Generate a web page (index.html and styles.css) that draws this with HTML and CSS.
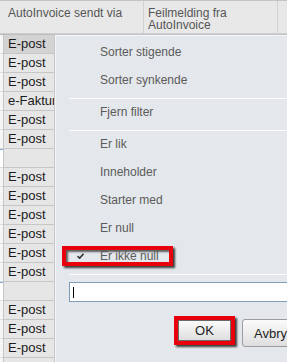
FILE: index.html
```html
<!DOCTYPE html>
<html>
<head>
<meta charset="utf-8">
<title>AutoInvoice filter</title>
<link rel="stylesheet" href="styles.css">
</head>
<body>
<div class="grid">
  <div class="head">
    <div class="hcell first">AutoInvoice sendt via</div>
    <div class="hcell second">Feilmelding fra<br>AutoInvoice</div>
    <div class="hcell rest"></div>
  </div>
  <div class="rows">
    <div class="row selected"><div class="gutter"></div><div class="cell">E-post</div></div>
    <div class="row"><div class="gutter"></div><div class="cell">E-post</div></div>
    <div class="row"><div class="gutter"></div><div class="cell">E-post</div></div>
    <div class="row"><div class="gutter"></div><div class="cell">e-Faktura</div></div>
    <div class="row"><div class="gutter"></div><div class="cell">E-post</div></div>
    <div class="row"><div class="gutter"></div><div class="cell">E-post</div></div>
    <div class="row gap"><div class="gutter"></div><div class="cell"></div></div>
    <div class="row"><div class="gutter"></div><div class="cell">E-post</div></div>
    <div class="row"><div class="gutter"></div><div class="cell">E-post</div></div>
    <div class="row"><div class="gutter"></div><div class="cell">E-post</div></div>
    <div class="row"><div class="gutter"></div><div class="cell">E-post</div></div>
    <div class="row"><div class="gutter"></div><div class="cell">E-post</div></div>
    <div class="row"><div class="gutter"></div><div class="cell">E-post</div></div>
    <div class="row gap"><div class="gutter"></div><div class="cell"></div></div>
    <div class="row"><div class="gutter"></div><div class="cell">E-post</div></div>
    <div class="row"><div class="gutter"></div><div class="cell">E-post</div></div>
    <div class="row"><div class="gutter"></div><div class="cell">E-post</div></div>
    <div class="row"><div class="gutter"></div><div class="cell">E-post</div></div>
  </div>
</div>

<div class="menu">
  <div class="item">Sorter stigende</div>
  <div class="item">Sorter synkende</div>
  <div class="sep"></div>
  <div class="item">Fjern filter</div>
  <div class="sep"></div>
  <div class="item">Er lik</div>
  <div class="item">Inneholder</div>
  <div class="item">Starter med</div>
  <div class="item">Er null</div>
  <div class="item checked">
    <span class="mark">
      <svg class="tick" width="7" height="6" viewBox="0 0 7 6"><path d="M0.5 3.2 L2.6 5.2 L6.5 0.8" fill="none" stroke="#333" stroke-width="1.6"/></svg>
      <span class="label">Er ikke null</span>
    </span>
  </div>
  <div class="sep"></div>
  <div class="filter"><span class="caret"></span></div>
  <div class="buttons">
    <span class="mark ok-mark"><button class="btn ok">OK</button></span>
    <button class="btn cancel">Avbryt</button>
  </div>
</div>
</body>
</html>
```

FILE: styles.css
```css
body{margin:0;width:287px;height:362px;overflow:hidden;position:relative;background:#fff;font-family:"Liberation Sans",Arial,sans-serif;}

.head{display:flex;height:34px;box-sizing:border-box;border-top:1px solid #c4c4c4;border-bottom:1px solid #cdcdcd;background:#e8e8e8;color:#555;font-size:12px;line-height:12px;}
.hcell{box-sizing:border-box;padding-top:6px;white-space:nowrap;}
.hcell.first{width:144px;padding-left:8px;border-right:1px solid #d2d2d2;}
.hcell.second{width:134px;padding-left:4px;border-right:1px solid #d2d2d2;}
.hcell.rest{flex:1;}

.rows{border-top:1px solid #bcbcbc;}
.row{display:flex;height:19px;}
.gutter{width:3px;box-sizing:border-box;height:19px;background:#f6f6f6;border-bottom:1px solid #dcdcdc;}
.row.gap .gutter{background:#fff;box-shadow:inset 0 1px #7ea6d3;}
.cell{width:140px;height:19px;box-sizing:border-box;border-left:1px solid #c6c6c6;border-bottom:1px solid #c6c6c6;background:#e6e6e6;padding-left:4px;font-size:13px;line-height:18px;color:#1b1b1b;white-space:nowrap;overflow:hidden;}
.row.selected .cell{background:#d3d3d3;}

.menu{position:absolute;left:54px;top:34px;width:250px;height:340px;box-sizing:border-box;border:1px solid #c2c6cb;background:#e4e7eb;box-shadow:inset 1px 1px #f4f5f7;padding-top:4px;font-size:12px;color:#5b5b5b;}
.item{height:26px;line-height:26px;padding-left:45px;margin-top:2px;white-space:nowrap;}
.item:first-child{margin-top:0;}
.sep{height:1px;background:#fdfdfd;margin:5px 0 0 14px;}
.sep + .item{margin-top:0;}

.item.checked{display:flex;align-items:center;padding-left:7px;}
.mark{display:flex;align-items:center;box-sizing:border-box;border:4px solid #e8000b;box-shadow:2px 2px 2px rgba(0,0,0,.75),inset 2px 2px 2px rgba(0,0,0,.6);}
.item.checked .mark{width:111px;height:20px;padding-left:11px;}
.tick{display:block;}
.label{margin-left:16px;line-height:12px;}

.filter{margin:7px 0 0 14px;height:20px;box-sizing:border-box;border:1px solid #7f9db9;background:#fff;padding:4px 0 0 3px;}
.caret{display:block;width:1px;height:11px;background:#000;}

.buttons{display:flex;align-items:flex-start;gap:7px;margin:14px 0 0 119px;}
.ok-mark{width:61px;height:29px;}
.btn{font-family:"Liberation Sans",Arial,sans-serif;font-size:13px;color:#222;background:linear-gradient(#fbfbfb,#dedede);border:1px solid #9c9c9c;border-radius:3px;padding:0;margin:0;}
.btn.ok{width:100%;height:100%;border-color:#6a6a6a;border-radius:0;}
.btn.cancel{margin-top:3px;height:28px;width:60px;text-align:left;padding-left:11px;white-space:nowrap;}
```
